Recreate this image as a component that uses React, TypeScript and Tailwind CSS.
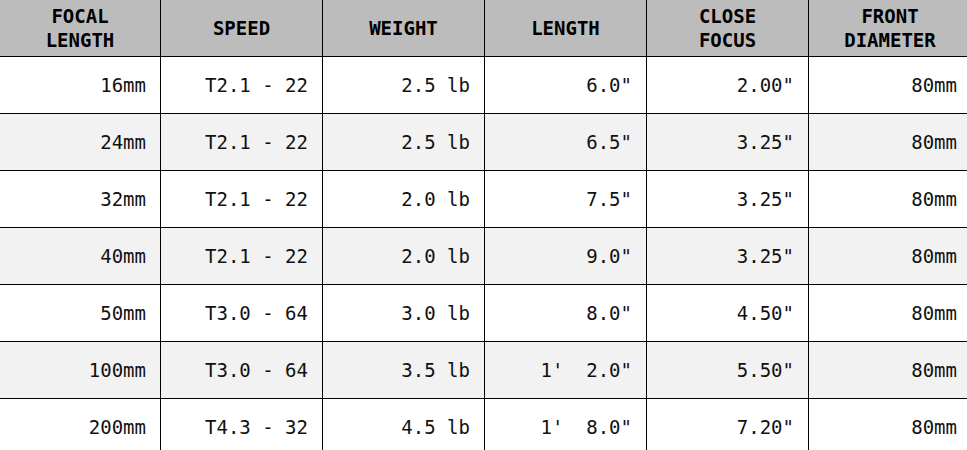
const headers = [
  ["FOCAL", "LENGTH"],
  ["SPEED"],
  ["WEIGHT"],
  ["LENGTH"],
  ["CLOSE", "FOCUS"],
  ["FRONT", "DIAMETER"],
];

const rows = [
  ["16mm", "T2.1 - 22", "2.5 lb", '6.0"', '2.00"', "80mm"],
  ["24mm", "T2.1 - 22", "2.5 lb", '6.5"', '3.25"', "80mm"],
  ["32mm", "T2.1 - 22", "2.0 lb", '7.5"', '3.25"', "80mm"],
  ["40mm", "T2.1 - 22", "2.0 lb", '9.0"', '3.25"', "80mm"],
  ["50mm", "T3.0 - 64", "3.0 lb", '8.0"', '4.50"', "80mm"],
  ["100mm", "T3.0 - 64", "3.5 lb", "1'  2.0\"", '5.50"', "80mm"],
  ["200mm", "T4.3 - 32", "4.5 lb", "1'  8.0\"", '7.20"', "80mm"],
];

export default function App() {
  return (
    <div className="w-[967px] h-[450px] overflow-hidden bg-white font-['DejaVu_Sans_Mono',monospace] text-[19px] text-[#111]">
      <div className="grid w-[972px] grid-cols-[161px_162px_162px_162px_162px_163px]">
        {/* header */}
        {headers.map((h, i) => (
          <div
            key={i}
            className="h-[57px] flex flex-col items-center justify-center bg-[#bcbcbc] border-b border-r border-black font-bold leading-[24px] text-center text-black"
          >
            {h.map((line) => (
              <span key={line}>{line}</span>
            ))}
          </div>
        ))}

        {/* body */}
        {rows.map((row, r) =>
          row.map((cell, c) => (
            <div
              key={r + "-" + c}
              className={`h-[57px] flex items-center justify-end pr-[14px] border-b border-r border-black whitespace-pre ${
                r % 2 === 1 ? "bg-[#f2f2f2]" : "bg-white"
              }`}
            >
              {cell}
            </div>
          ))
        )}
      </div>
    </div>
  );
}
